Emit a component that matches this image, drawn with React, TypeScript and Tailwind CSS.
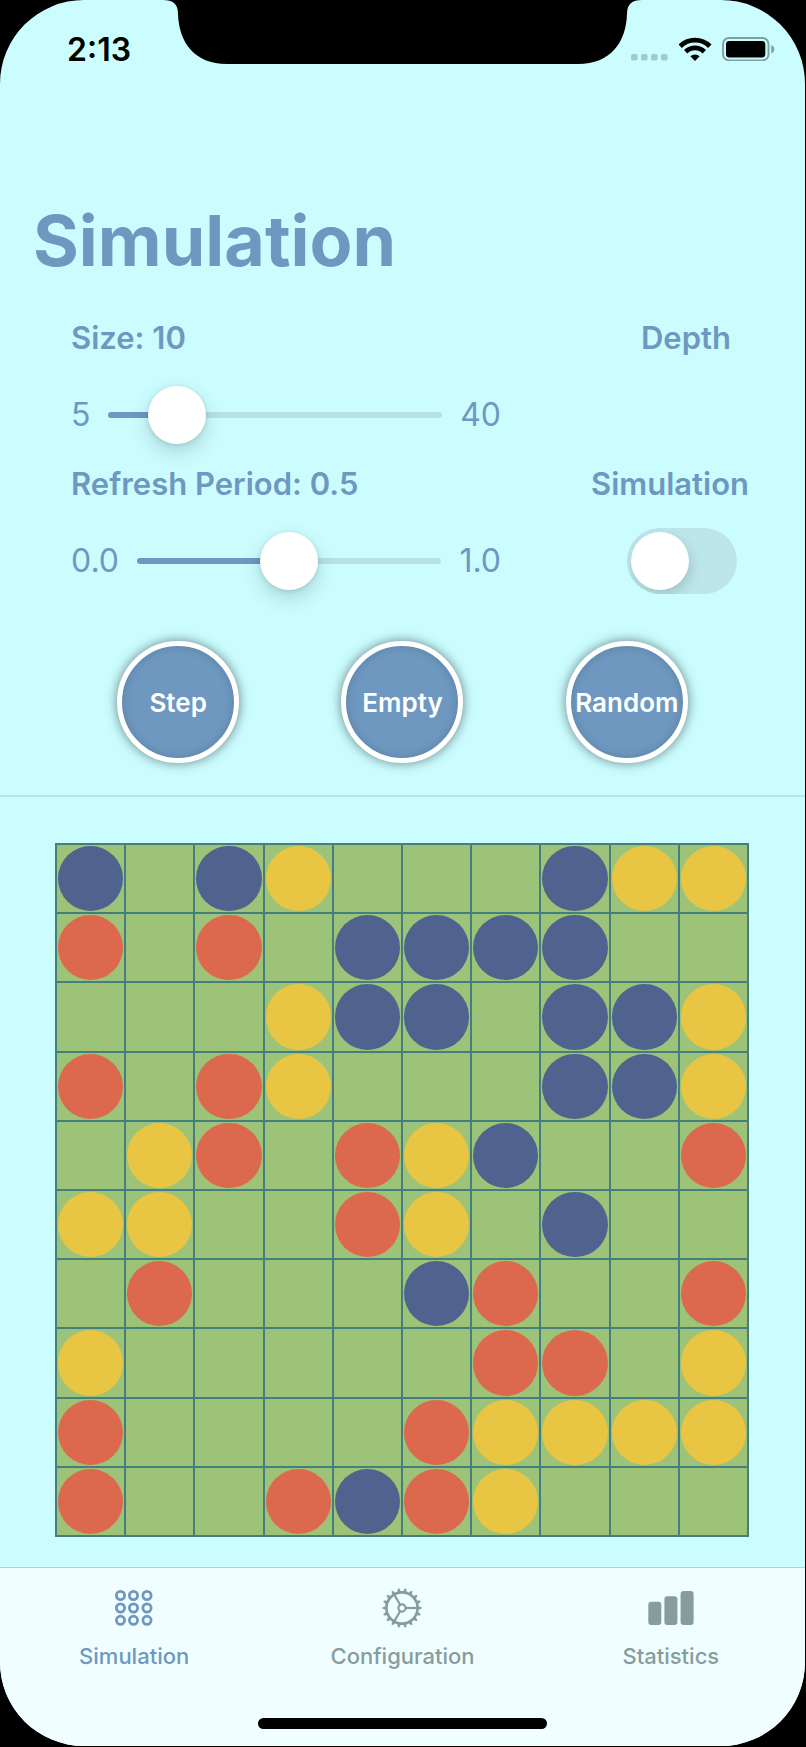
import { useState } from "react";

type Cell = "b" | "r" | "y" | ".";

const ROWS = [
  "b.by...byy",
  "r.r.bbbb..",
  "...ybb.bby",
  "r.ry...bby",
  ".yr.ryb..r",
  "yy..ry.b..",
  ".r...br..r",
  "y.....rr.y",
  "r....ryyyy",
  "r..rbry...",
];

const CELL_COLORS: Record<Exclude<Cell, ".">, string> = {
  b: "bg-[#50638e]",
  r: "bg-[#dc694d]",
  y: "bg-[#e8c644]",
};

function StatusBar() {
  return (
    <header className="relative flex items-start justify-between pt-[30px] pr-[30px] pl-[67px]">
      <svg
        className="absolute top-0 left-1/2 h-16 w-[480px] -translate-x-1/2"
        viewBox="0 0 480 64"
        aria-hidden="true"
      >
        <path d="M0 0C10 0 15 4 15 14C16 42 31 64 64 64H415C448 64 463 42 464 14C464 4 469 0 479 0Z" fill="#000" />
      </svg>
      <time className="text-[32px] leading-10 font-semibold text-black">2:13</time>
      <div className="flex items-end gap-2.5 pt-[7px]">
        <svg className="h-6 w-[38px]" viewBox="0 0 38 24" fill="#a2cacc" aria-hidden="true">
          <rect x="0" y="17" width="6.6" height="6.6" rx="2" />
          <rect x="10" y="17" width="6.6" height="6.6" rx="2" />
          <rect x="20" y="17" width="6.6" height="6.6" rx="2" />
          <rect x="30" y="17" width="6.6" height="6.6" rx="2" />
        </svg>
        <svg className="h-6 w-[33px]" viewBox="0.5 0 33 24" fill="none" stroke="#000" strokeWidth="4.8" aria-hidden="true">
          <path d="M1.7 9.2A21 21 0 0 1 31.3 9.2" />
          <path d="M7.2 14.8A13.2 13.2 0 0 1 25.8 14.8" />
          <path d="M16.5 24L11.9 19.3A6.8 6.8 0 0 1 21.1 19.3Z" fill="#000" stroke="none" />
        </svg>
        <svg className="h-6 w-[53px]" viewBox="0 0 53 24" aria-hidden="true">
          <rect x="1" y="1" width="45.5" height="22.4" rx="6" fill="none" stroke="#7fa0a1" strokeWidth="1.9" />
          <rect x="4" y="4" width="39.3" height="16.4" rx="3.4" fill="#000" />
          <path d="M49.3 8C53.3 9.4 53.3 15 49.3 16.4Z" fill="#7fa0a1" />
        </svg>
      </div>
    </header>
  );
}

type SliderRowProps = {
  id: string;
  label: string;
  minLabel: string;
  maxLabel: string;
  min: number;
  max: number;
  step: number;
  value: number;
  onChange: (value: number) => void;
};

function SliderRow({ id, label, minLabel, maxLabel, min, max, step, value, onChange }: SliderRowProps) {
  const percent = ((value - min) / (max - min)) * 100;
  return (
    <div className="flex flex-col gap-6">
      <label htmlFor={id} className="text-[31px] leading-10 font-semibold">
        {label}
      </label>
      <div className="flex h-[66px] items-center gap-[18px] text-[32px] leading-10">
        <span>{minLabel}</span>
        <div className="relative flex h-[58px] min-w-0 flex-1 items-center">
          <div className="absolute inset-x-0 h-1.5 overflow-hidden rounded-full bg-[#b8e1e3]">
            <div className="h-full bg-[#6e98c0]" style={{ width: `${percent}%` }} />
          </div>
          <input
            id={id}
            type="range"
            min={min}
            max={max}
            step={step}
            value={value}
            onChange={(e) => onChange(Number(e.target.value))}
            className="relative h-[58px] w-full min-w-0 cursor-pointer appearance-none bg-transparent [&::-webkit-slider-thumb]:size-[58px] [&::-webkit-slider-thumb]:appearance-none [&::-webkit-slider-thumb]:rounded-full [&::-webkit-slider-thumb]:bg-white [&::-webkit-slider-thumb]:shadow-[0_8px_20px_rgba(0,0,0,0.16),0_1px_5px_rgba(0,0,0,0.12)]"
          />
        </div>
        <span>{maxLabel}</span>
      </div>
    </div>
  );
}

function RoundButton({ label }: { label: string }) {
  return (
    <button
      type="button"
      className="flex size-[122px] items-center justify-center rounded-full border-[5px] border-white bg-[#6e98c0] text-[26px] font-semibold text-white shadow-[0_0_12px_rgba(0,0,0,0.5),inset_0_0_10px_rgba(0,0,0,0.16)]"
    >
      {label}
    </button>
  );
}

function Board() {
  return (
    <div
      role="img"
      aria-label="Cell grid"
      className="grid aspect-square grid-cols-10 grid-rows-10 border-t-2 border-l-2 border-[#437f7f] bg-[#9dc378]"
    >
      {ROWS.flatMap((row, y) =>
        (row.split("") as Cell[]).map((cell, x) => (
          <div key={`${y}-${x}`} className="border-r-2 border-b-2 border-[#437f7f] p-px">
            {cell !== "." && <div className={`size-full rounded-full ${CELL_COLORS[cell]}`} />}
          </div>
        )),
      )}
    </div>
  );
}

function CirclesIcon() {
  const xs = [6.5, 19.5, 33];
  const ys = [7.5, 20, 32.3];
  return (
    <svg className="size-10" viewBox="0 0 40 40" fill="none" stroke="currentColor" strokeWidth="2.8" aria-hidden="true">
      {ys.map((y) => xs.map((x) => <circle key={`${x}-${y}`} cx={x} cy={y} r="4.1" />))}
    </svg>
  );
}

function GearIcon() {
  const teeth = Array.from({ length: 18 }, (_, i) => i * 20);
  return (
    <svg className="size-10" viewBox="0 0 40 40" fill="none" stroke="currentColor" strokeWidth="2.2" aria-hidden="true">
      <circle cx="20" cy="20" r="15.6" strokeWidth="2.6" />
      <circle cx="20" cy="20" r="3.6" />
      {teeth.map((a) => (
        <path key={a} d="M36 18.2L39.6 19.2V20.8L36 21.8Z" fill="currentColor" stroke="none" transform={`rotate(${a} 20 20)`} />
      ))}
      {[0, 120, 240].map((a) => (
        <path key={a} d="M23.5 20H36" transform={`rotate(${a} 20 20)`} />
      ))}
    </svg>
  );
}

function BarsIcon() {
  return (
    <svg className="h-10 w-[46px]" viewBox="0 0 46 40" fill="currentColor" aria-hidden="true">
      <rect x="0.3" y="13.7" width="13" height="23.3" rx="3" />
      <rect x="16.4" y="8.3" width="13" height="28.7" rx="3" />
      <rect x="32.6" y="3" width="13" height="34" rx="3" />
    </svg>
  );
}

const TABS = [
  { label: "Simulation", icon: <CirclesIcon />, active: true },
  { label: "Configuration", icon: <GearIcon />, active: false },
  { label: "Statistics", icon: <BarsIcon />, active: false },
];

export default function App() {
  const [size, setSize] = useState(10);
  const [period, setPeriod] = useState(0.5);
  const [running, setRunning] = useState(false);

  return (
    <div className="min-h-screen bg-black pr-px pb-px font-['Inter','Liberation_Sans',sans-serif]">
      <div className="flex flex-col overflow-hidden rounded-[84px] bg-[#cbfdff] text-[#6e98c0]">
        <StatusBar />

        <main className="flex flex-col">
          <h1 className="mt-[131px] px-[33px] text-[70px] leading-20 font-bold">Simulation</h1>

          <section className="mt-[37px] flex justify-between pr-14 pl-[71px]">
            <div className="flex w-[430px] max-w-[64%] flex-col gap-4">
              <SliderRow
                id="size"
                label={`Size: ${size}`}
                minLabel="5"
                maxLabel="40"
                min={5}
                max={40}
                step={1}
                value={size}
                onChange={setSize}
              />
              <SliderRow
                id="period"
                label={`Refresh Period: ${period.toFixed(1)}`}
                minLabel="0.0"
                maxLabel="1.0"
                min={0}
                max={1}
                step={0.1}
                value={period}
                onChange={setPeriod}
              />
            </div>
            <div className="flex flex-col items-end justify-between">
              <span className="mr-[18px] text-[31px] leading-10 font-semibold">Depth</span>
              <div className="flex flex-col items-end gap-6">
                <label htmlFor="running" className="text-[31px] leading-10 font-semibold">
                  Simulation
                </label>
                <input
                  id="running"
                  type="checkbox"
                  role="switch"
                  checked={running}
                  onChange={(e) => setRunning(e.target.checked)}
                  className="mr-3 flex h-[66px] w-[110px] cursor-pointer appearance-none items-center overflow-hidden rounded-full bg-[#bde6ea] px-1 before:size-[58px] before:rounded-full before:bg-white before:shadow-[2px_5px_12px_rgba(0,0,0,0.15)] checked:justify-end checked:bg-[#6e98c0]"
                />
              </div>
            </div>
          </section>

          <section className="mt-[47px] grid grid-cols-3 justify-items-center px-[66px]">
            <RoundButton label="Step" />
            <RoundButton label="Empty" />
            <RoundButton label="Random" />
          </section>

          <hr className="mt-8 border-t-2 border-[#b9e7e9]" />

          <section className="pt-[46px] pr-14 pb-[30px] pl-[55px]">
            <Board />
          </section>
        </main>

        <footer className="flex flex-col items-center border-t border-[#b3cfd0] bg-[#f0feff] pb-[17px]">
          <nav className="grid w-full grid-cols-3 pt-5">
            {TABS.map((tab) => (
              <a
                key={tab.label}
                href="#"
                aria-current={tab.active ? "page" : undefined}
                className={`flex flex-col items-center gap-3.5 text-[22px] leading-7 font-medium ${tab.active ? "text-[#6e98c0]" : "text-[#879d9d]"}`}
              >
                {tab.icon}
                {tab.label}
              </a>
            ))}
          </nav>
          <div className="mt-12 h-[11px] w-[36%] rounded-full bg-black" />
        </footer>
      </div>
    </div>
  );
}
